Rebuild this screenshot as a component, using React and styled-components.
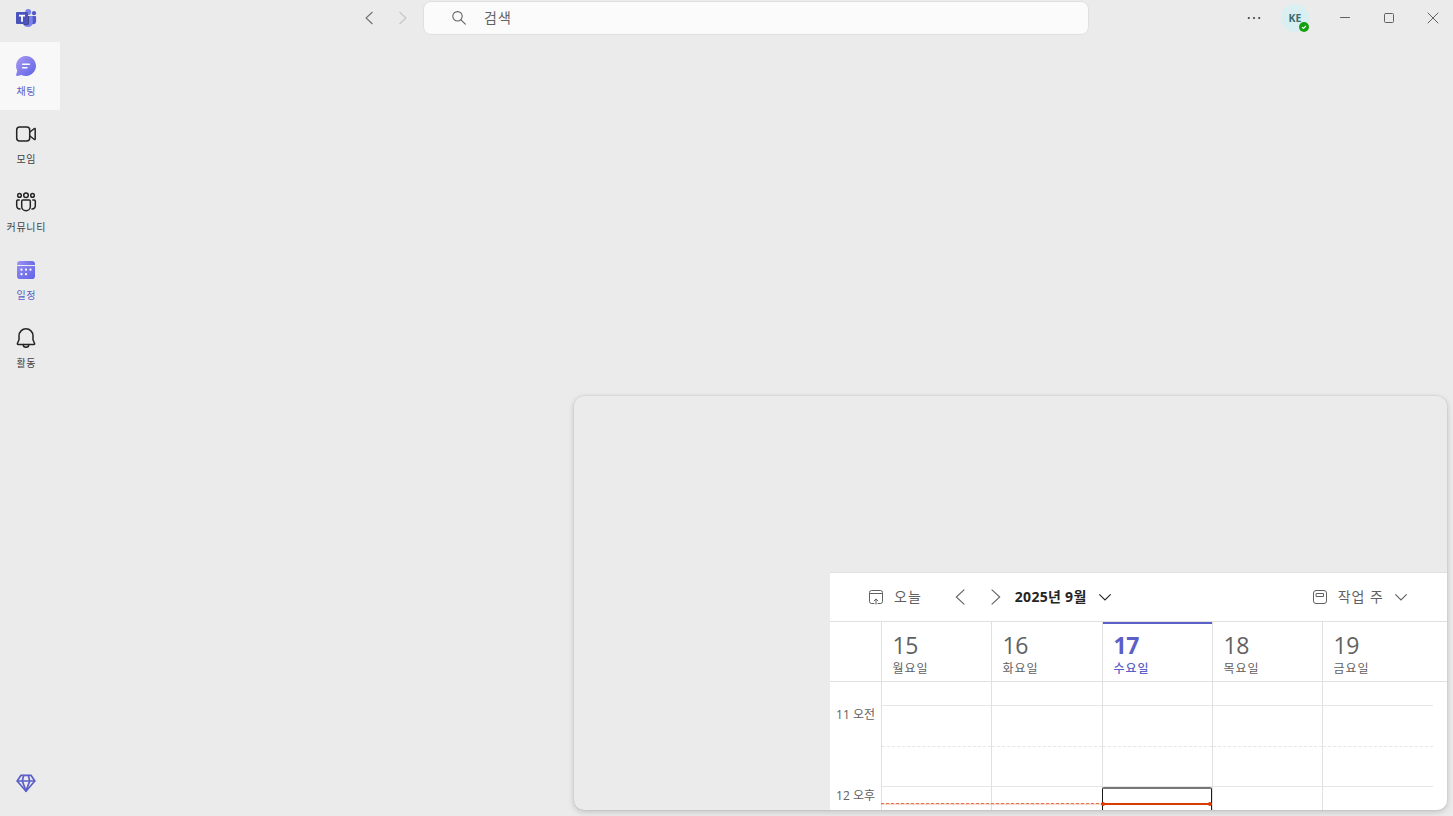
import React from 'react';
import styled, {createGlobalStyle, css} from 'styled-components';

const brand = '#5b5fc7';
const grey = '#616161';
const line = '#e0e0e0';
const dark = '#242424';

const GlobalStyle = createGlobalStyle`
  * {
    box-sizing: border-box;
  }

  body {
    margin: 0;
    overflow: hidden;
    background-color: #ebebeb;
    color: ${dark};
    font-family: 'Open Sans', 'Noto Sans CJK KR', sans-serif;
  }

  svg {
    display: block;
    flex-shrink: 0;
  }
`;

//layout
const Window = styled.div`
  width: 100vw;
  height: 100vh;
  display: flex;
  flex-direction: column;
`;

const TitleBar = styled.header`
  height: 42px;
  flex-shrink: 0;
  display: flex;
  align-items: flex-start;
`;

const LogoBox = styled.div`
  width: 52px;
  height: 36px;
  display: flex;
  align-items: center;
  justify-content: center;
`;

const HistoryButtons = styled.div`
  width: 371px;
  height: 36px;
  padding-right: 12px;
  display: flex;
  align-items: center;
  justify-content: flex-end;
  gap: 18px;
`;

const SearchBox = styled.div`
  width: 666px;
  height: 34px;
  margin-top: 1px;
  padding-left: 27px;
  display: flex;
  align-items: center;
  gap: 17px;
  background-color: #fbfbfb;
  border: 1px solid #e0e0e0;
  border-radius: 8px;
  color: ${grey};
  font-size: 14px;
  line-height: 20px;
  letter-spacing: 1px;
`;

const WindowTools = styled.div`
  flex: 1;
  height: 36px;
  padding-right: 12px;
  display: flex;
  align-items: center;
  justify-content: flex-end;
  gap: 28px;
`;

const Account = styled.div`
  display: flex;
  align-items: center;
  gap: 19px;
`;

const Avatar = styled.div`
  position: relative;
  width: 28px;
  height: 28px;
  border-radius: 50%;
  display: flex;
  align-items: center;
  justify-content: center;
  background-color: #d9eff2;
  color: #3d6e73;
  font-size: 10.5px;
  font-weight: 700;
`;

const Presence = styled.span`
  position: absolute;
  right: 0;
  bottom: 0;
`;

const Body = styled.div`
  flex: 1;
  min-height: 0;
  display: flex;
`;

const Rail = styled.nav`
  width: 60px;
  display: flex;
  flex-direction: column;
`;

const RailItem = styled.div`
  height: 68px;
  padding: 12px 8px 0 0;
  display: flex;
  flex-direction: column;
  align-items: center;
  gap: 6px;
  color: ${(props) => (props.$accent ? brand : dark)};
  background-color: ${(props) => (props.$selected ? '#f8f8f8' : 'transparent')};
`;

const RailLabel = styled.span`
  color: ${(props) => (props.$accent ? brand : '#424242')};
  font-size: 10px;
  line-height: 15px;
  letter-spacing: 0.7px;
  margin-right: -0.7px;
  white-space: nowrap;
`;

const RailFooter = styled.div`
  margin-top: auto;
  padding: 0 8px 23px 0;
  display: flex;
  justify-content: center;
`;

const Main = styled.main`
  flex: 1;
  display: flex;
  align-items: flex-end;
  justify-content: flex-end;
  padding: 0 6px 6px 0;
`;

const Panel = styled.section`
  width: 873px;
  height: 414px;
  display: flex;
  align-items: flex-end;
  justify-content: flex-end;
  overflow: hidden;
  background-color: #ebebeb;
  border-radius: 10px;
  box-shadow: 0 0 2px rgba(0, 0, 0, 0.12), 0 2px 6px rgba(0, 0, 0, 0.18);
`;

//calendar
const Calendar = styled.div`
  width: 617px;
  height: 238px;
  display: flex;
  flex-direction: column;
  background-color: #fff;
  border-top: 1px solid ${line};
`;

const Toolbar = styled.div`
  height: 48px;
  flex-shrink: 0;
  padding: 0 37px 0 38px;
  display: flex;
  align-items: center;
  color: ${grey};
  font-size: 14px;
  line-height: 20px;
`;

const ToolText = styled.span`
  margin-left: ${(props) => props.$gap}px;
  margin-right: ${(props) => props.$after || 0}px;
  letter-spacing: 1px;
  white-space: nowrap;
  ${(props) =>
    props.$bold &&
    css`
      width: 73px;
      color: ${dark};
      font-weight: 700;
      font-size: 14px;
      letter-spacing: 0.3px;
    `}
`;

const Steps = styled.div`
  display: flex;
  gap: 16px;
  margin-left: 28px;
`;

const ViewPicker = styled.div`
  margin-left: auto;
  display: flex;
  align-items: center;
`;

const DayGrid = styled.div`
  flex-shrink: 0;
  display: grid;
  grid-template-columns: 51px 110px 111px 110px 110px 125px;
`;

const DayHeaders = styled(DayGrid)`
  height: 61px;
  border-top: 1px solid ${line};
  border-bottom: 1px solid ${line};
`;

const DayHeader = styled.div`
  border-left: 1px solid ${line};
  color: ${(props) => (props.$today ? brand : grey)};
  font-weight: ${(props) => (props.$today ? 700 : 400)};
  padding-top: 8px;
  padding-left: 10.5px;
  background: ${(props) =>
    props.$today ? `linear-gradient(${brand}, ${brand}) 0 0 / 100% 2px no-repeat` : 'none'};
`;

const DayNumber = styled.div`
  font-size: 23px;
  line-height: 30px;
  letter-spacing: -0.4px;
`;

const DayName = styled.div`
  margin-top: 1px;
  font-size: 12px;
  line-height: 15px;
  letter-spacing: 0.9px;
  font-weight: ${(props) => (props.$today ? 500 : 400)};
`;

const Hours = styled(DayGrid)`
  height: 128px;
`;

const TimeLabels = styled.div`
  padding: 25px 6px 0 0;
  color: ${grey};
  font-size: 12px;
  line-height: 16px;
  text-align: right;
  white-space: nowrap;
`;

const TimeLabel = styled.div`
  height: 81px;
`;

const DayColumn = styled.div`
  position: relative;
  border-left: 1px solid ${line};
  padding-right: ${(props) => (props.$last ? 14 : 0)}px;
`;

const Slot = styled.div`
  height: ${(props) => props.$height}px;
  border-bottom: 1px ${(props) => (props.$half ? 'dashed' : 'solid')} #e6e6e6;
`;

const PastLine = styled.div`
  position: absolute;
  top: 121px;
  left: -1px;
  right: 0;
  height: 1px;
  background: repeating-linear-gradient(90deg, #df7350 0 3px, #fbe3da 3px 5px);
  box-shadow: 0 1px 0 rgba(218, 59, 1, 0.2);
`;

const SelectedSlot = styled.div`
  position: absolute;
  top: 105px;
  left: -1px;
  width: 110px;
  height: 30px;
  border: 1px solid #1b1b1b;
  border-top: 2px solid #777;
  border-radius: 2px;
`;

const NowLine = styled.div`
  position: absolute;
  top: 121px;
  left: -1px;
  right: 0;
  height: 2px;
  background-color: #da3b01;

  &::before,
  &::after {
    content: '';
    position: absolute;
    top: -1px;
    width: 4px;
    height: 4px;
    border-radius: 50%;
    background-color: #da3b01;
  }

  &::before {
    left: -1px;
  }

  &::after {
    right: 0;
  }
`;

//icons
function Icon({size = 20, stroke = 1.5, color = 'currentColor', children}) {
  return (
    <svg
      width={size}
      height={size}
      viewBox={`0 0 ${size} ${size}`}
      fill="none"
      stroke={color}
      strokeWidth={stroke}
      strokeLinecap="round"
      strokeLinejoin="round"
    >
      {children}
    </svg>
  );
}

function TeamsLogo() {
  return (
    <svg width="22" height="20" viewBox="0 0 22 20">
      <circle cx="19" cy="5.2" r="2.1" fill="#5059c9" />
      <path d="M15 8h5.2c.6 0 .9.4.9.9v4a3.3 3.3 0 0 1-3.3 3.3H15z" fill="#5059c9" />
      <circle cx="13.2" cy="4" r="3" fill="#7b83eb" />
      <path d="M8.5 8h8.2c.6 0 1 .4 1 1v5.2a4.9 4.9 0 0 1-9.5 1.6z" fill="#7b83eb" />
      <path d="M8 8h6.1v7c0 1.2-.6 1.9-1.5 1.9H8.6z" fill="#34366f" opacity=".75" />
      <rect x="1" y="4" width="12" height="12" rx="1" fill="#4b53bc" />
      <path d="M4 6.8h6v1.7H7.9v5.3H6.1V8.5H4z" fill="#fff" />
    </svg>
  );
}

function ChatIcon() {
  return (
    <svg width="24" height="24" viewBox="0 0 24 24">
      <defs>
        <linearGradient id="chatFill" x1="0" y1="0" x2="1" y2="1">
          <stop offset="0" stopColor="#a899f2" />
          <stop offset="1" stopColor="#5f63e6" />
        </linearGradient>
      </defs>
      <path
        d="M12 2a10 10 0 1 1-4.6 18.9l-4.2 1.1c-.7.2-1.3-.4-1.1-1.1l1.1-4.2A10 10 0 0 1 12 2z"
        fill="url(#chatFill)"
      />
      <path d="M8.7 10.3h6.6M8.7 13.8h4.2" stroke="#fff" strokeWidth="1.6" strokeLinecap="round" />
    </svg>
  );
}

function MeetIcon() {
  return (
    <Icon size={24}>
      <rect x="2.7" y="5" width="13" height="14" rx="3" />
      <path d="M15.9 10l4.5-3.5c.3-.2.8 0 .8.4v10.2c0 .4-.5.6-.8.4L15.9 14" />
    </Icon>
  );
}

function CommunityIcon() {
  return (
    <Icon size={24}>
      <circle cx="5.5" cy="5.4" r="1.8" />
      <circle cx="12" cy="5.2" r="2.3" />
      <circle cx="18.5" cy="5.4" r="1.8" />
      <path d="M8.8 9.9h6.4c.7 0 1.1.5 1.1 1.1v5.4a4.3 4.3 0 0 1-8.6 0V11c0-.6.4-1.1 1.1-1.1z" />
      <path d="M5.2 9.9H3.8c-.6 0-1.1.5-1.1 1.1v4.4a3.6 3.6 0 0 0 3.3 3.6M18.8 9.9h1.4c.6 0 1.1.5 1.1 1.1v4.4a3.6 3.6 0 0 1-3.3 3.6" />
    </Icon>
  );
}

function CalendarIcon() {
  return (
    <svg width="24" height="24" viewBox="0 0 24 24">
      <defs>
        <linearGradient id="calendarFill" x1="0" y1="0" x2="1" y2="1">
          <stop offset="0" stopColor="#9389f1" />
          <stop offset="1" stopColor="#5f63e6" />
        </linearGradient>
        <linearGradient id="calendarTop" x1="0" y1="0" x2="1" y2="0">
          <stop offset="0" stopColor="#9d93f3" />
          <stop offset="1" stopColor="#6a6ae6" />
        </linearGradient>
      </defs>
      <path d="M3 6.9V6.1A3.1 3.1 0 0 1 6.1 3h11.8A3.1 3.1 0 0 1 21 6.1v.8z" fill="url(#calendarTop)" />
      <path d="M3 8.1h18v9.8a3.1 3.1 0 0 1-3.1 3.1H6.1A3.1 3.1 0 0 1 3 17.9z" fill="url(#calendarFill)" />
      <g fill="#fff">
        <circle cx="7.5" cy="11.7" r="1.1" />
        <circle cx="12" cy="11.7" r="1.1" />
        <circle cx="16.5" cy="11.7" r="1.1" />
        <circle cx="7.5" cy="16.2" r="1.1" />
        <circle cx="12" cy="16.2" r="1.1" />
      </g>
    </svg>
  );
}

function BellIcon() {
  return (
    <Icon size={24}>
      <path d="M12 2.8a7 7 0 0 0-7 7v4l-1.6 3.7c-.2.5.1.9.6.9h16c.5 0 .8-.4.6-.9L19 13.8v-4a7 7 0 0 0-7-7z" />
      <path d="M9.2 18.5a2.8 2.8 0 0 0 5.6 0" />
    </Icon>
  );
}

function DiamondIcon() {
  return (
    <Icon size={20} color={brand} stroke={1.7}>
      <path d="M5 2.3h10L18.8 8 10 18.3 1.2 8z" />
      <path d="M1.4 8h17.2M7.6 2.6L6.3 8 10 18 13.7 8l-1.3-5.4" />
    </Icon>
  );
}

function TodayIcon() {
  return (
    <Icon size={16} stroke={1}>
      <path d="M6 14.5H3.5a2 2 0 0 1-2-2v-9a2 2 0 0 1 2-2h9a2 2 0 0 1 2 2v9a2 2 0 0 1-2 2H10M1.5 4.5h13" />
      <path d="M8 15.2v-5M6.2 11.8L8 10l1.8 1.8" />
    </Icon>
  );
}

function WorkWeekIcon() {
  return (
    <Icon size={16} stroke={1}>
      <rect x="1.5" y="1.5" width="13" height="13" rx="2.5" />
      <rect x="4.5" y="4.5" width="7" height="3" />
    </Icon>
  );
}

function Chevron({direction, size = 20, stroke = 1.1, color = 'currentColor'}) {
  const paths = {
    left: 'M14 2.8L6.3 10l7.7 7.2',
    right: 'M6 2.8l7.7 7.2L6 17.2',
    down: 'M4 7.3l6 6 6-6',
  };
  return (
    <svg
      width={size}
      height={size}
      viewBox="0 0 20 20"
      fill="none"
      stroke={color}
      strokeWidth={stroke * (20 / size)}
      strokeLinecap="round"
    >
      <path d={paths[direction]} />
    </svg>
  );
}

const railItems = [
  {label: '채팅', icon: ChatIcon, accent: true, selected: true},
  {label: '모임', icon: MeetIcon},
  {label: '커뮤니티', icon: CommunityIcon},
  {label: '일정', icon: CalendarIcon, accent: true},
  {label: '활동', icon: BellIcon},
];

const days = [
  {date: 15, name: '월요일', past: true},
  {date: 16, name: '화요일', past: true},
  {date: 17, name: '수요일', today: true},
  {date: 18, name: '목요일'},
  {date: 19, name: '금요일'},
];

function TopBar() {
  return (
    <TitleBar>
      <LogoBox>
        <TeamsLogo />
      </LogoBox>
      <HistoryButtons>
        <Chevron direction="left" size={16} color="#707070" />
        <Chevron direction="right" size={16} color="#c4c4c4" />
      </HistoryButtons>
      <SearchBox>
        <Icon size={16} stroke={1.1}>
          <circle cx="6.5" cy="6.3" r="4.7" />
          <path d="M10 9.9l4.3 4.3" />
        </Icon>
        <span>검색</span>
      </SearchBox>
      <WindowTools>
        <Account>
          <svg width="16" height="16" viewBox="0 0 16 16" fill="#424242">
            <circle cx="2.8" cy="8" r="1.1" />
            <circle cx="8" cy="8" r="1.1" />
            <circle cx="13.2" cy="8" r="1.1" />
          </svg>
          <Avatar>
            KE
            <Presence>
              <svg width="10" height="10" viewBox="0 0 10 10">
                <circle cx="5" cy="5" r="5" fill="#13a10e" />
                <path d="M3 5.1l1.4 1.3L7 3.8" fill="none" stroke="#fff" strokeWidth="1.2" />
              </svg>
            </Presence>
          </Avatar>
        </Account>
        <Icon size={16} stroke={1} color={grey}>
          <path d="M3.5 7.5h9" />
        </Icon>
        <Icon size={16} stroke={1} color={grey}>
          <rect x="3.5" y="3.5" width="9" height="9" rx="1" />
        </Icon>
        <Icon size={16} stroke={1} color={grey}>
          <path d="M3 3l10 10M13 3L3 13" />
        </Icon>
      </WindowTools>
    </TitleBar>
  );
}

function SideRail() {
  return (
    <Rail>
      {railItems.map(({label, icon: ItemIcon, accent, selected}) => (
        <RailItem key={label} $accent={accent} $selected={selected}>
          <ItemIcon />
          <RailLabel $accent={accent}>{label}</RailLabel>
        </RailItem>
      ))}
      <RailFooter>
        <DiamondIcon />
      </RailFooter>
    </Rail>
  );
}

function WeekCalendar() {
  return (
    <Calendar>
      <Toolbar>
        <TodayIcon />
        <ToolText $gap={10}>오늘</ToolText>
        <Steps>
          <Chevron direction="left" />
          <Chevron direction="right" />
        </Steps>
        <ToolText $gap={9} $after={8} $bold>
          2025년 9월
        </ToolText>
        <Chevron direction="down" size={18} color={dark} />
        <ViewPicker>
          <WorkWeekIcon />
          <ToolText $gap={10} $after={8}>
            작업 주
          </ToolText>
          <Chevron direction="down" size={18} />
        </ViewPicker>
      </Toolbar>
      <DayHeaders>
        <div />
        {days.map(({date, name, today}) => (
          <DayHeader key={date} $today={today}>
            <DayNumber>{date}</DayNumber>
            <DayName $today={today}>{name}</DayName>
          </DayHeader>
        ))}
      </DayHeaders>
      <Hours>
        <TimeLabels>
          <TimeLabel>11 오전</TimeLabel>
          <TimeLabel>12 오후</TimeLabel>
        </TimeLabels>
        {days.map(({date, past, today}, index) => (
          <DayColumn key={date} $last={index === days.length - 1}>
            <Slot $height={24} />
            <Slot $height={41} $half />
            <Slot $height={40} />
            {past && <PastLine />}
            {today && <SelectedSlot />}
            {today && <NowLine />}
          </DayColumn>
        ))}
      </Hours>
    </Calendar>
  );
}

export default function App() {
  return (
    <>
      <GlobalStyle />
      <Window>
        <TopBar />
        <Body>
          <SideRail />
          <Main>
            <Panel>
              <WeekCalendar />
            </Panel>
          </Main>
        </Body>
      </Window>
    </>
  );
}
